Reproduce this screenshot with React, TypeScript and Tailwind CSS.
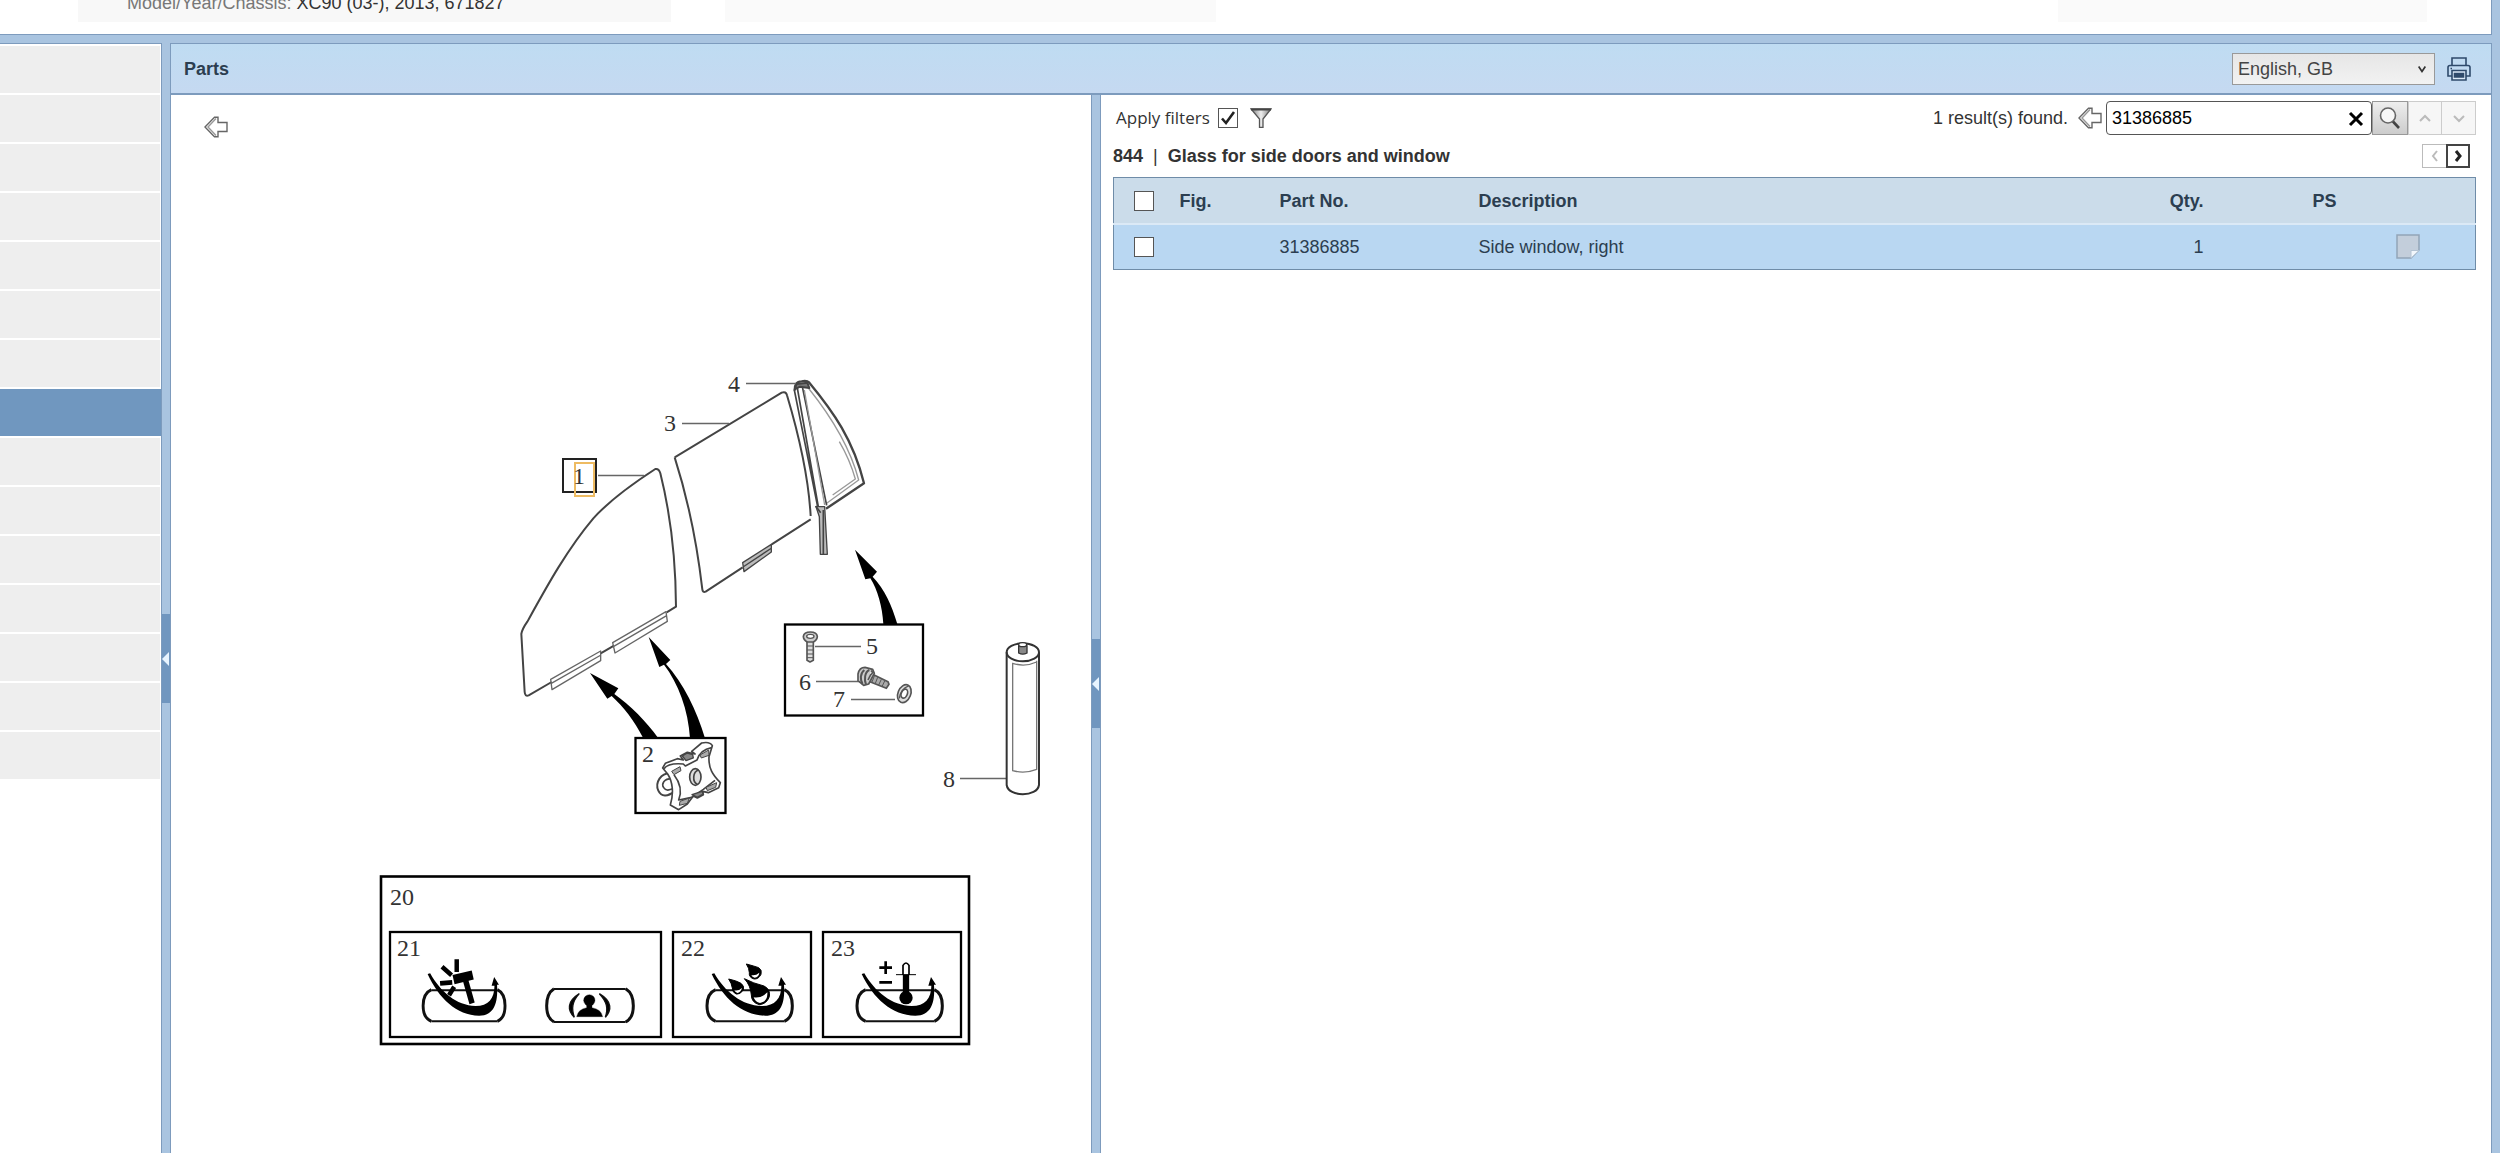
import { useState } from "react"
import type { ReactNode } from "react"

const SECTION_COUNT = 15
const ACTIVE_SECTION = 7

const parts = [{ fig: "", partNo: "31386885", description: "Side window, right", qty: 1, ps: "" }]

function BackArrow() {
  return (
    <svg viewBox="0 0 24 22" className="h-[22px] w-6" fill="#fff" stroke="#666" strokeWidth="1.4" aria-hidden="true">
      <path d="M10.5 1.2 1 11l9.500 9.800 3.500 0V15.500h9V6.500h-9V1.200z" />
      <path d="M12 2.500 4 11l8 8.500" fill="none" stroke="#999" />
    </svg>
  )
}

function PrinterIcon() {
  return (
    <svg viewBox="0 0 24 24" className="h-6 w-6" fill="none" stroke="#2f4a6b" strokeWidth="1.6" aria-hidden="true">
      <path d="M5 8.500V1h14v7.500" />
      <path d="M5 19H1V10.500Q1 8.500 3 8.500h18q2 0 2 2V19h-4" />
      <path d="M5 13.500h14V23H5z" fill="#dbe9f7" />
      <path d="M7.500 16.500h9v3.500h-9z" fill="#2f4a6b" />
      <path d="M3.500 11.500h1.500" />
    </svg>
  )
}

function FunnelIcon() {
  return (
    <svg viewBox="0 0 22 20" className="h-5 w-[22px]" aria-hidden="true">
      <defs>
        <linearGradient id="funnel" x1="0" x2="1">
          <stop offset="0" stopColor="#777" />
          <stop offset=".5" stopColor="#eee" />
          <stop offset="1" stopColor="#777" />
        </linearGradient>
      </defs>
      <path d="M1 1h20l-8 10v8.500h-3.500V11z" fill="url(#funnel)" stroke="#555" strokeWidth="1.300" />
      <path d="M1 1.500h20" stroke="#444" strokeWidth="2" />
    </svg>
  )
}

function NoteIcon() {
  return (
    <svg viewBox="0 0 24 25" className="h-[25px] w-6" aria-hidden="true">
      <path d="M1 1h22v15l-8 8H1z" fill="#c3cedb" stroke="#93a5b8" strokeWidth="1.500" />
      <path d="M15 24v-7.500h8z" fill="#f2f7fc" stroke="#b4c4d4" />
    </svg>
  )
}

function Chevron({ d, className }: { d: string; className: string }) {
  return (
    <svg viewBox="0 0 12 12" className={className} fill="none" stroke="currentColor" aria-hidden="true">
      <path d={d} />
    </svg>
  )
}

function Checkbox({ label, defaultChecked = false }: { label: string; defaultChecked?: boolean }) {
  return (
    <span className="relative block h-5 w-5">
      <input
        type="checkbox"
        aria-label={label}
        defaultChecked={defaultChecked}
        className="peer block h-5 w-5 appearance-none border border-[#555] bg-white"
      />
      <svg
        viewBox="0 0 20 20"
        className="pointer-events-none absolute inset-0 hidden h-5 w-5 peer-checked:block"
        fill="none"
        stroke="#222"
        strokeWidth="2.600"
        aria-hidden="true"
      >
        <path d="M4 10.500l4 4.500L16 4" />
      </svg>
    </span>
  )
}

function Splitter({ label, children }: { label: string; children?: ReactNode }) {
  return (
    <div className="flex w-[10px] shrink-0 flex-col border-x border-[#7d9bbd] bg-[#a9c4e0]">
      {children}
      <button
        type="button"
        aria-label={label}
        className="flex h-[89px] w-2 items-center justify-center bg-[#7096bf]"
      >
        <svg viewBox="0 0 8 14" className="h-[14px] w-2" fill="#e8f4ff" aria-hidden="true">
          <path d="M0 7 7 0v14z" />
        </svg>
      </button>
    </div>
  )
}

// Windscreen style pictogram: rounded glass outline plus the swoosh under it
function GlassPictogram({ children }: { children: ReactNode }) {
  return (
    <g>
      <path d="M167 391H373M167 484H373" fill="none" stroke="#111" strokeWidth="6" />
      <path d="M167 389Q141 400 141 437T167 484M373 389Q397 400 397 437T373 484" fill="none" stroke="#111" strokeWidth="9" />
      <path
        d="M155 342L163 340C195 395 245 437 305 438C345 438 364 415 364 377H355L363 351 378 374H372C376 430 362 467 316 467C245 466 190 415 155 342Z"
        fill="#000"
      />
      {children}
    </g>
  )
}

function PartsDiagram() {
  return (
    <svg
      viewBox="371 370 680 690"
      className="h-[690px] w-[680px] font-['Liberation_Serif',serif] text-[24px]"
      role="img"
      aria-label="Glass for side doors"
    >
      {/* door glasses */}
      <g transform="translate(500 360) scale(.33333)" fill="none" stroke="#444" strokeWidth="6" strokeLinejoin="round">
        <path d="M500 757L528 740C527 560 506 440 481 340Q477 325 466 327C395 373 330 420 280 475C200 570 140 680 82 785Q66 808 64 822L74 996Q75 1010 86 1006L155 966M302 880L342 857" />
        <g stroke="#666" strokeWidth="4">
          <path d="M152 958L302 873V902L156 989ZM154 970L303 885" />
          <path d="M338 848L498 755L502 784L345 879ZM340 860L500 767" />
        </g>
        <path d="M524 292L845 98Q858 93 861 106C895 220 925 340 932 468M932 478L815 553M728 622L617 695Q608 698 607 688C592 560 565 420 524 292" />
        <path d="M728 608L814 553V576L732 635ZM729 621L815 564" fill="#bbb" strokeWidth="4" />

        {/* quarter window with its channel */}
        <path d="M884 92Q882 65 905 64Q920 60 928 68C1000 155 1060 240 1092 370L978 446" strokeWidth="7" />
        <path d="M925 84C990 165 1050 260 1076 360L980 430" stroke="#999" strokeWidth="4" />
        <path d="M1018 245Q1050 300 1066 357L998 405" stroke="#999" strokeWidth="4" />
        <path d="M883 90L954 445M892 84L962 480M907 80L980 436" strokeWidth="5" />
        <path d="M913 90L974 435" stroke="#999" strokeWidth="4" />
        <path d="M884 88L890 72 922 68 928 84 900 80Z" fill="#777" />
        <path d="M948 440H974L982 583H961L958 470Z" fill="#bbb" strokeWidth="4" />
        <path d="M970 450V583M947 438L962 458" strokeWidth="5" />
      </g>

      {/* pointer arrows */}
      <g transform="translate(500 360) scale(.33333)" fill="#000">
        <path d="M1065 569L1131 635 1118 650C1155 690 1175 735 1192 792H1150C1147 740 1133 690 1111 655L1096 658Z" />
        <path d="M270 939L355 985 343 1002C390 1035 440 1085 475 1135H430C402 1080 370 1040 335 1008L322 1016Z" />
        <path d="M446 831L511 900 498 912C550 970 590 1050 615 1135H570C565 1050 535 970 492 914L478 921Z" />
      </g>

      {/* leader lines */}
      <g stroke="#666" strokeWidth="1.300">
        <path d="M598 475.500H644M682 423.500H729M746 383.500H796" />
        <path d="M815 646.500H861M816 681.500H860M851 699.500H895M960 778.500H1006" />
      </g>

      {/* 2: clip */}
      <rect x="635.500" y="738" width="90" height="75" fill="#fff" stroke="#000" strokeWidth="2.300" />
      <g transform="translate(600 600) scale(.33333)" fill="#fff" stroke="#444" strokeWidth="5" strokeLinejoin="round">
        <path d="M218 520C180 515 165 550 175 572S205 588 224 574" strokeWidth="6" />
        <path d="M218 536C190 535 184 552 191 563S207 571 222 565" />
        <path d="M188 504L196 490 232 476 250 480 241 468 262 457 285 462 275 454 305 429Q330 424 337 437L327 470C325 505 338 525 361 548L356 563 325 578 308 574 310 584 292 594 280 588 262 612 236 629 211 615C222 580 218 545 203 522Z" />
        <path d="M192 506Q205 488 250 492L256 498 291 480Q300 450 335 443" fill="none" />
        <path d="M222 524C242 550 246 575 236 600L275 592 310 568 345 541" fill="none" />
        <path d="M215 514L240 500 243 512 222 524ZM300 465L326 450 327 466 304 474ZM240 604L268 594 262 610 238 616ZM318 562L350 548 347 562 322 572Z" fill="#aaa" strokeWidth="3" />
        <path d="M247 468L262 459 278 464 280 474 258 482ZM276 584L306 574 309 582 292 592Z" fill="#888" strokeWidth="4" />
        <ellipse cx="286" cy="531" rx="17" ry="25" fill="#ddd" />
        <path d="M296 510C278 515 276 545 292 553" fill="none" />
      </g>

      {/* 5-7: screws and washer */}
      <rect x="785" y="624.500" width="138" height="91" fill="none" stroke="#000" strokeWidth="2.300" />
      <g transform="translate(760 590) scale(.33333)" fill="#ddd" stroke="#555" strokeWidth="5" strokeLinejoin="round">
        <path d="M141 152V211L150 216 160 211V152Z" />
        <path d="M141 168H160M141 180H160M141 192H160M141 203H160" strokeWidth="3" />
        <path d="M130 139Q132 126 151 126T172 139Q172 150 160 156H142Q130 150 130 139Z" fill="#ccc" />
        <ellipse cx="151" cy="139" rx="11" ry="6" fill="#fff" strokeWidth="4" />
        <path d="M330 249L384 275 387 283 379 295 322 272Z" fill="#aaa" />
        <path d="M343 258L336 276M353 262L346 280M364 268L356 285M374 273L366 290" strokeWidth="3" />
        <path d="M294 252Q298 232 315 232L338 238 343 250 326 282 311 286 294 272Z" fill="#ccc" />
        <path d="M313 240C300 250 300 270 308 282M328 240C314 246 312 268 318 284" fill="none" strokeWidth="6" />
        <path d="M333 242Q342 248 332 254L324 270" fill="#fff" />
        <ellipse cx="433" cy="311" rx="19" ry="28" transform="rotate(22 433 311)" fill="#ddd" />
        <ellipse cx="433" cy="311" rx="9" ry="14" transform="rotate(22 433 311)" fill="#fff" />
        <path d="M418 325Q422 297 446 288" fill="none" strokeWidth="4" />
      </g>

      {/* 8: sealant cartridge */}
      <g transform="translate(760 590) scale(.33333)" fill="none" stroke="#333" strokeWidth="6">
        <path d="M740 187V585C745 622 832 622 837 585V187" />
        <ellipse cx="788.500" cy="187" rx="48.500" ry="27" />
        <path d="M758 218V542Q795 552 830 538V212M758 220Q795 232 830 216" stroke="#777" strokeWidth="4" />
        <path d="M776 166V189Q788 196 801 189V166" fill="#888" strokeWidth="4" />
        <ellipse cx="788" cy="164" rx="12" ry="6" fill="#fff" strokeWidth="4" />
      </g>

      {/* 20-23: glass variants */}
      <g fill="none" stroke="#000">
        <rect x="381" y="876.500" width="588" height="167.500" strokeWidth="2.600" />
        <rect x="390" y="932" width="271" height="105" strokeWidth="2.300" />
        <rect x="673" y="932" width="138" height="105" strokeWidth="2.300" />
        <rect x="823" y="932" width="138" height="105" strokeWidth="2.300" />
      </g>
      <g transform="translate(378 860) scale(.32 .33333)">
        <GlassPictogram>
          <g stroke="#000" strokeWidth="14">
            <path d="M246 298V336M200 320L230 346M194 370L232 367M238 380L222 406" />
            <path d="M274 362L294 430" strokeWidth="17" />
            <path d="M236 359L296 345" strokeWidth="28" />
          </g>
        </GlassPictogram>
      </g>
      <g transform="translate(360 860) scale(.33333)" stroke="#111">
        <path d="M582 387H797M582 486H797" strokeWidth="6" />
        <path d="M582 386Q560 400 560 437T582 486M797 386Q820 400 820 437T797 486" fill="none" strokeWidth="9" />
        <path d="M658 401C620 425 622 450 643 472C634 445 636 425 658 401ZM718 401C758 425 755 450 736 472C745 445 741 425 718 401Z" strokeWidth="4" />
        <circle cx="688" cy="421" r="17" />
        <path d="M650 470Q654 448 680 443V435H696V443Q724 448 728 470Z" />
      </g>
      <g transform="translate(660 860) scale(.33333)">
        <GlassPictogram>
          <g fill="#000" stroke="#000" strokeWidth="3">
            <path d="M259 312Q282 318 296 323Q307 330 303 343Q296 358 282 357Q266 352 268 338Q268 325 259 312Z" />
            <path d="M206 357Q230 362 243 370Q254 378 250 390Q240 405 228 402Q216 396 217 384Q215 370 206 357Z" />
            <path d="M253 356Q280 370 312 378Q332 388 328 410Q320 432 298 434Q274 428 274 405Q272 376 253 356Z" />
          </g>
          <path d="M274 345Q286 348 298 338Q296 352 284 353Q276 351 274 345ZM223 391Q235 394 246 384Q242 398 232 399Q225 396 223 391ZM281 412Q304 416 322 397Q324 424 300 429Q285 426 281 412Z" fill="#fff" />
        </GlassPictogram>
      </g>
      <g transform="translate(810 860) scale(.33333)">
        <GlassPictogram>
          <path d="M208 323H246M227 304V342M208 367H246" stroke="#000" strokeWidth="8" />
          <path d="M279 345V316Q288 302 297 316V345" fill="#fff" stroke="#000" strokeWidth="5" />
          <path d="M258 344H318" stroke="#000" strokeWidth="3" />
          <path d="M288 344V410" stroke="#000" strokeWidth="19" />
          <circle cx="288" cy="413" r="20" />
        </GlassPictogram>
      </g>

      {/* callout of the selected part */}
      <rect x="563" y="459" width="33" height="33" fill="none" stroke="#222" strokeWidth="2" />
      <rect x="575" y="463" width="19" height="33" fill="none" stroke="#eebb62" strokeWidth="2" />

      <g fill="#333">
        <text x="573" y="484">1</text>
        <text x="642" y="762">2</text>
        <text x="664" y="431">3</text>
        <text x="728" y="392">4</text>
        <text x="866" y="654">5</text>
        <text x="799" y="690">6</text>
        <text x="833" y="707">7</text>
        <text x="943" y="787">8</text>
        <text x="390" y="905">20</text>
        <text x="397" y="956">21</text>
        <text x="681" y="956">22</text>
        <text x="831" y="956">23</text>
      </g>
    </svg>
  )
}

function PartsTable() {
  return (
    <table className="w-full table-fixed border-collapse border border-[#6f8ca8] text-left text-[#2c3e50]">
      <colgroup>
        <col className="w-[66px]" />
        <col className="w-[100px]" />
        <col className="w-[199px]" />
        <col />
        <col className="w-[100px]" />
        <col className="w-[142px]" />
        <col className="w-20" />
      </colgroup>
      <thead>
        <tr className="h-[46px] border-b-2 border-[#dbe9f6] bg-[#cbdcea] *:pt-[2px]">
          <th className="pl-5">
            <Checkbox label="Select all parts" />
          </th>
          <th>Fig.</th>
          <th>Part No.</th>
          <th>Description</th>
          <th className="pr-[50px] text-right">Qty.</th>
          <th className="text-center">PS</th>
          <th></th>
        </tr>
      </thead>
      <tbody>
        {parts.map((part) => (
          <tr key={part.partNo} className="h-[46px] bg-[#b9d7f2]">
            <td className="pl-5">
              <Checkbox label={"Select " + part.partNo} />
            </td>
            <td>{part.fig}</td>
            <td>{part.partNo}</td>
            <td>{part.description}</td>
            <td className="pr-[50px] text-right">{part.qty}</td>
            <td className="text-center">{part.ps}</td>
            <td>
              <button type="button" aria-label="Add note" className="block">
                <NoteIcon />
              </button>
            </td>
          </tr>
        ))}
      </tbody>
    </table>
  )
}

function SearchBar() {
  const [query, setQuery] = useState("31386885")

  return (
    <div className="flex items-center">
      <span className="mr-[10px]">1 result(s) found.</span>
      <button type="button" aria-label="Previous search" className="mr-1">
        <BackArrow />
      </button>
      <div className="relative">
        <input
          type="text"
          aria-label="Search parts"
          value={query}
          onChange={(e) => setQuery(e.target.value)}
          className="block h-[34px] w-[266px] rounded-sm border border-[#555] bg-white px-[5px] text-black"
        />
        <button
          type="button"
          aria-label="Clear search"
          onClick={() => setQuery("")}
          className="absolute top-[10px] right-2 text-black"
        >
          <svg viewBox="0 0 16 16" className="h-4 w-4" stroke="currentColor" strokeWidth="3" aria-hidden="true">
            <path d="M2 2l12 12M14 2 2 14" />
          </svg>
        </button>
      </div>
      <button
        type="button"
        aria-label="Search"
        className="flex h-[34px] w-9 items-center justify-center border border-[#999] bg-linear-to-b from-[#eee] to-[#ccc]"
      >
        <svg viewBox="0 0 22 22" className="h-[22px] w-[22px]" fill="#f7f7f7" stroke="#666" aria-hidden="true">
          <path d="M13.500 14 20 21" stroke="#444" strokeWidth="2.600" />
          <circle cx="9" cy="8.500" r="7.500" strokeWidth="1.600" />
        </svg>
      </button>
      <button
        type="button"
        aria-label="Previous match"
        className="flex h-[34px] w-[34px] items-center justify-center border border-[#ccc] bg-[#f6f6f6] text-[#bbb]"
      >
        <Chevron d="M1 9l5-5 5 5" className="h-3 w-3 stroke-[2]" />
      </button>
      <button
        type="button"
        aria-label="Next match"
        className="flex h-[34px] w-[34px] items-center justify-center border border-l-0 border-[#ccc] bg-[#f6f6f6] text-[#bbb]"
      >
        <Chevron d="M1 4l5 5 5-5" className="h-3 w-3 stroke-[2]" />
      </button>
    </div>
  )
}

function ResultsPane() {
  return (
    <section className="min-w-0 flex-1 bg-white pt-[6px] pr-[15px] pl-3">
      <div className="flex items-center justify-between">
        <div className="flex items-center pl-[3px]">
          <label className="flex items-center gap-2 font-['Open_Sans',sans-serif] text-[17px] text-[#333]">
            Apply filters
            <Checkbox label="Apply filters" defaultChecked />
          </label>
          <button type="button" aria-label="Filter settings" className="ml-3">
            <FunnelIcon />
          </button>
        </div>
        <SearchBar />
      </div>
      <div className="flex h-[42px] items-center justify-between pr-[6px]">
        <h2 className="flex gap-[10px] font-bold">
          <span>844</span>
          <span className="font-normal">|</span>
          <span>Glass for side doors and window</span>
        </h2>
        <div className="flex">
          <button
            type="button"
            aria-label="Previous group"
            className="flex h-6 w-6 items-center justify-center border border-r-0 border-[#bbb] text-[#bbb]"
          >
            <Chevron d="M8 1 4 6l4 5" className="h-3 w-3 stroke-[2]" />
          </button>
          <button
            type="button"
            aria-label="Next group"
            className="flex h-6 w-6 items-center justify-center border-2 border-[#444] text-[#222]"
          >
            <Chevron d="M4 1l4 5-4 5" className="h-3 w-3 stroke-[3]" />
          </button>
        </div>
      </div>
      <PartsTable />
    </section>
  )
}

export default function App() {
  return (
    <div className="flex min-h-screen flex-col bg-[#a9c4e0] font-['Liberation_Sans',Arial,sans-serif] text-[18px] leading-5 text-[#333]">
      <header className="mr-2 h-[35px] border-r border-b border-[#7d9bbd] bg-white">
        <div className="flex h-[22px] pl-[78px]">
          <div className="flex w-[593px] items-end gap-[5px] bg-[#f8f8f8] pb-[9px] pl-[49px] whitespace-nowrap">
            <span className="text-[#777]">Model/Year/Chassis:</span>
            <span>XC90 (03-), 2013, 671827</span>
          </div>
          <div className="ml-[54px] w-[491px] bg-[#fafafa]"></div>
          <div className="mr-16 ml-auto w-[369px] bg-[#fafafa]"></div>
        </div>
      </header>

      <div className="mt-2 mr-2 flex flex-1">
        <nav className="w-[161px] shrink-0 border-t border-[#7d9bbd] bg-white" aria-label="Sections">
          <ul className="flex flex-col gap-[2px] pt-[2px]">
            {Array.from({ length: SECTION_COUNT }, (_, i) => (
              <li key={i} className={i === ACTIVE_SECTION ? "h-[47px] bg-[#7097bf]" : "mr-px h-[47px] bg-[#eeeeee]"}></li>
            ))}
          </ul>
        </nav>

        <Splitter label="Collapse sections">
          <div className="h-[571px]"></div>
        </Splitter>

        <main className="flex min-w-0 flex-1 flex-col border-t border-r border-[#7d9bbd]">
          <div className="flex h-[51px] items-center border-b-2 border-[#7d9bbd] bg-linear-to-b from-[#bfdcf2] to-[#c5d9f1] pr-5 pl-[13px]">
            <h1 className="flex-1 font-bold text-[#2c3e50]">Parts</h1>
            <div className="relative mr-3">
              <select
                aria-label="Language"
                className="block h-8 w-[203px] appearance-none border border-[#999] bg-linear-to-b from-[#e6e6e6] to-[#f2f2f2] px-[5px] text-[#444]"
              >
                <option>English, GB</option>
              </select>
              <Chevron
                d="M2 3l4 6 4-6"
                className="pointer-events-none absolute top-[11px] right-2 h-[10px] w-[10px] stroke-[2]"
              />
            </div>
            <button type="button" aria-label="Print">
              <PrinterIcon />
            </button>
          </div>

          <div className="flex flex-1">
            <section className="w-[920px] shrink-0 bg-white">
              <button type="button" aria-label="Back" className="mt-[21px] ml-[33px] block">
                <BackArrow />
              </button>
              <div className="mt-[232px] ml-50">
                <PartsDiagram />
              </div>
            </section>
            <Splitter label="Collapse diagram">
              <div className="h-[544px]"></div>
            </Splitter>
            <ResultsPane />
          </div>
        </main>
      </div>
    </div>
  )
}
